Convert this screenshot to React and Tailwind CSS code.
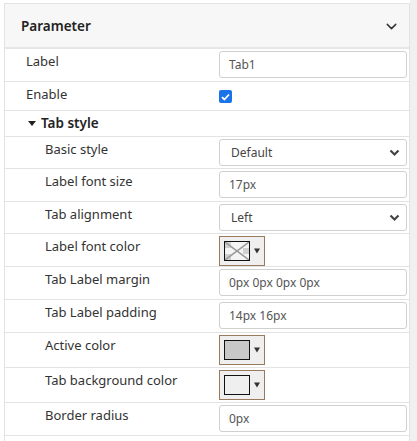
import React from 'react';
import { ChevronDown } from 'lucide-react';

const font = { fontFamily: '"Noto Sans", "Open Sans", sans-serif' };

function TextInput({ value }) {
  return (
    <div className="w-[188px] h-[27px] border border-[#d0d0d0] rounded-[3px] bg-white flex items-center px-[9px] text-[12px] text-[#555]">
      {value}
    </div>
  );
}

function SelectInput({ value }) {
  return (
    <div className="w-[188px] h-[27px] border border-[#d0d0d0] rounded-[3px] bg-white flex items-center justify-between pl-[11px] pr-[6px] text-[12px] text-[#444]">
      <span>{value}</span>
      <svg width="11" height="8" viewBox="0 0 11 8" className="text-[#444]">
        <path d="M1.5 1.5 L5.5 5.5 L9.5 1.5" fill="none" stroke="currentColor" strokeWidth="2.2" />
      </svg>
    </div>
  );
}

function Swatch({ kind }) {
  return (
    <div className="w-[46px] h-[30px] border border-[#9a7a5c] bg-[#efefef] flex items-center pl-[4px] gap-[4px]">
      <div className="w-[26px] h-[20px] border border-[#111] bg-[#efefef] overflow-hidden">
        {kind === 'none' ? (
          <svg width="24" height="18" viewBox="0 0 24 18">
            <rect x="0" y="0" width="24" height="18" fill="#f4f4f4" />
            <rect x="0" y="0" width="6" height="6" fill="#d0d0d0" />
            <rect x="18" y="6" width="6" height="6" fill="#d0d0d0" />
            <rect x="0" y="12" width="6" height="6" fill="#d0d0d0" />
            <line x1="0" y1="0" x2="24" y2="18" stroke="#9a9a9a" strokeWidth="1.5" />
            <line x1="24" y1="0" x2="0" y2="18" stroke="#9a9a9a" strokeWidth="1.5" />
          </svg>
        ) : (
          <div className={`w-full h-full ${kind === 'gray' ? 'bg-[#c8c8c8]' : 'bg-[#efefef]'}`} />
        )}
      </div>
      <svg width="6" height="6" viewBox="0 0 6 6">
        <path d="M0 0.5 L6 0.5 L3 5.5 Z" fill="#333" />
      </svg>
    </div>
  );
}

function Row({ label, indent, h, children }) {
  return (
    <div className={`flex border-b border-[#e3e3e6] ${h}`}>
      <div className={`w-[214px] ${indent ? 'pl-[40px]' : 'pl-[21px]'} pt-[3px] text-[13px] text-[#333]`}>
        {label}
      </div>
      <div className="flex-1 pt-[2px]">{children}</div>
    </div>
  );
}

export default function App() {
  return (
    <div className="w-[417px] h-[441px] bg-white flex overflow-hidden" style={font}>
      <div className="w-[410px] pt-[3px]">
        <div className="ml-[4px] border-l border-r border-[#e3e3e6] border-t">
          <div className="h-[45px] bg-[#f7f7f7] border-b-2 border-[#e6e6e9] flex items-center justify-between pl-[16px] pr-[9px] pt-[2px]">
            <span className="text-[13.5px] font-semibold text-[#222]">Parameter</span>
            <ChevronDown size={17} strokeWidth={2} className="text-[#333]" />
          </div>
          <div className="flex flex-col">
            <Row label="Label" h="h-[33px]">
              <TextInput value="Tab1" />
            </Row>
            <Row label="Enable" h="h-[29px]">
              <div className="pt-[6px]">
                <div className="w-[13px] h-[13px] rounded-[2px] bg-[#1a73e8] flex items-center justify-center">
                  <svg width="9" height="8" viewBox="0 0 9 8">
                    <path d="M1 4.2 L3.4 6.5 L8 1.5" fill="none" stroke="#fff" strokeWidth="1.8" />
                  </svg>
                </div>
              </div>
            </Row>
            <div className="h-[26px] border-b border-[#e3e3e6] flex items-center pl-[23px] gap-[5px]">
              <svg width="8" height="5" viewBox="0 0 8 5">
                <path d="M0 0 L8 0 L4 5 Z" fill="#222" />
              </svg>
              <span className="text-[13.5px] font-semibold text-[#222]">Tab style</span>
            </div>
            <Row label="Basic style" indent h="h-[32px]">
              <SelectInput value="Default" />
            </Row>
            <Row label="Label font size" indent h="h-[33px]">
              <TextInput value="17px" />
            </Row>
            <Row label="Tab alignment" indent h="h-[32px]">
              <SelectInput value="Left" />
            </Row>
            <Row label="Label font color" indent h="h-[33px]">
              <Swatch kind="none" />
            </Row>
            <Row label="Tab Label margin" indent h="h-[33px]">
              <TextInput value="0px 0px 0px 0px" />
            </Row>
            <Row label="Tab Label padding" indent h="h-[33px]">
              <TextInput value="14px 16px" />
            </Row>
            <Row label="Active color" indent h="h-[35px]">
              <Swatch kind="gray" />
            </Row>
            <Row label="Tab background color" indent h="h-[35px]">
              <Swatch kind="light" />
            </Row>
            <Row label="Border radius" indent h="h-[33px]">
              <TextInput value="0px" />
            </Row>
            <div className="h-[20px]" />
          </div>
        </div>
      </div>
      <div className="flex-1 bg-[#f0f0f0]" />
    </div>
  );
}
